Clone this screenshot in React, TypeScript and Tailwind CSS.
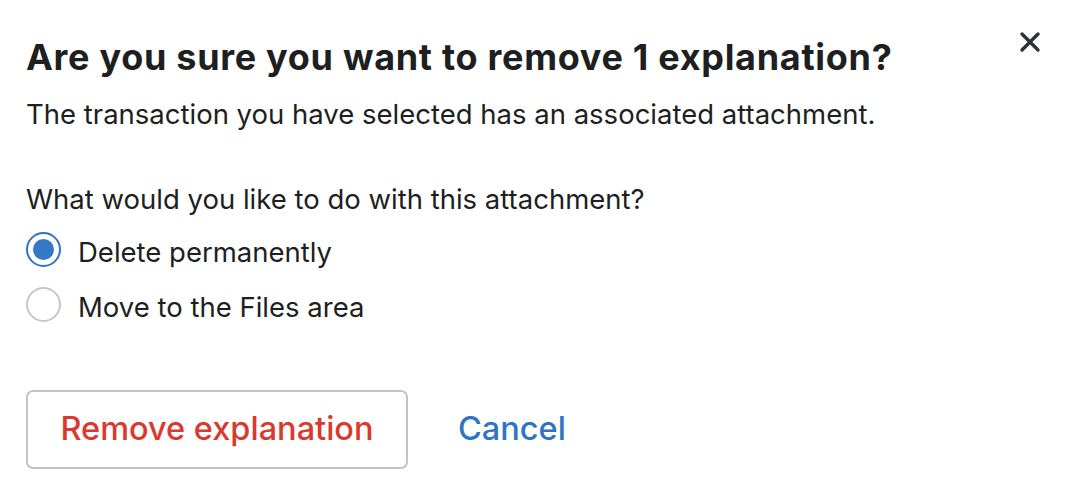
import React, { useState } from "react";

const options = [
  { id: "delete", label: "Delete permanently" },
  { id: "move", label: "Move to the Files area" },
];

export default function App() {
  const [choice, setChoice] = useState("delete");

  return (
    <div className="w-[1080px] h-[494px] bg-white text-[#1d1f21] font-['Inter','Noto_Sans',sans-serif] relative">
      <button className="absolute top-[29px] right-[37px] w-[26px] h-[26px] flex items-center justify-center text-[#2b3338]">
        <svg width="22" height="22" viewBox="0 0 22 22" fill="none" stroke="currentColor" strokeWidth="3.4" strokeLinecap="round">
          <path d="M3 3 L19 19 M19 3 L3 19" />
        </svg>
      </button>

      <div className="pl-[26px] pt-[35px] flex flex-col">
        <h1 className="text-[36px] leading-[44px] font-bold tracking-[0.7px]">
          Are you sure you want to remove 1 explanation?
        </h1>
        <p className="mt-[18px] text-[27.5px] leading-[34px]">
          The transaction you have selected has an associated attachment.
        </p>

        <p className="mt-[51px] text-[27.5px] leading-[34px]">
          What would you like to do with this attachment?
        </p>

        <div className="mt-[16px] flex flex-col gap-[20px]">
          {options.map((o) => {
            const on = choice === o.id;
            return (
              <label key={o.id} className="flex items-center h-[35px] gap-[17px] cursor-pointer" onClick={() => setChoice(o.id)}>
                <span
                  className={
                    on
                      ? "w-[35px] h-[35px] rounded-full border-[2px] border-[#2f73c4] flex items-center justify-center"
                      : "w-[35px] h-[35px] rounded-full border-[2px] border-[#c3c7cc]"
                  }
                >
                  {on && <span className="w-[21px] h-[21px] rounded-full bg-[#3578c4]" />}
                </span>
                <span className="text-[27.5px] leading-[34px] translate-y-[2px]">{o.label}</span>
              </label>
            );
          })}
        </div>

        <div className="mt-[68px] flex items-center gap-[50px]">
          <button className="w-[382px] h-[79px] rounded-[7px] border-[2px] border-[#c0c4c9] text-[#d9392e] text-[32.5px] font-medium">
            Remove explanation
          </button>
          <button className="text-[#2f73c4] text-[32.5px] font-medium">Cancel</button>
        </div>
      </div>
    </div>
  );
}
